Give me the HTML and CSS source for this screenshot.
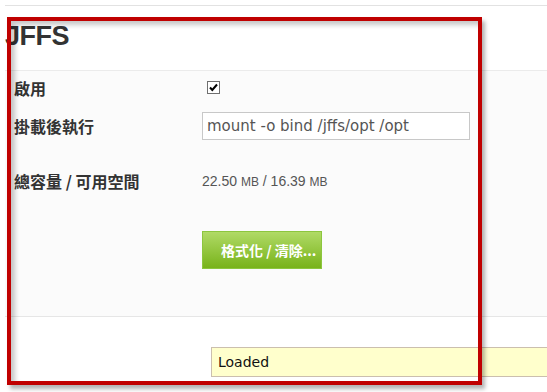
FILE: index.html
```html
<!DOCTYPE html>
<html lang="zh-Hant">
<head>
<meta charset="UTF-8">
<title>JFFS</title>
<link rel="stylesheet" href="styles.css">
</head>
<body>

<div class="page">
    <div class="topline"></div>
    <h1>JFFS</h1>

    <!-- 設定 -->
    <div class="section">
        <div class="row r-enable">
            <div class="label">啟用</div>
            <div class="value">
                <span class="checkbox">
                    <svg width="11" height="11" viewBox="0 0 11 11"><path d="M2 5.5 L4.3 8 L9 2.5" fill="none" stroke="#000" stroke-width="2"/></svg>
                </span>
            </div>
        </div>
        <div class="row r-exec">
            <div class="label">掛載後執行</div>
            <div class="value">
                <input class="text" type="text" value="mount -o bind /jffs/opt /opt">
            </div>
        </div>
        <div class="row r-size">
            <div class="label">總容量 / 可用空間</div>
            <div class="value size">22.50 <small>MB</small> / 16.39 <small>MB</small></div>
        </div>
        <div class="row r-btn">
            <div class="label"></div>
            <div class="value"><button class="btn">格式化 / 清除...</button></div>
        </div>
    </div>

    <div class="status">Loaded</div>
</div>

<!-- 注目枠 -->
<div class="highlight"></div>

</body>
</html>
```

FILE: styles.css
```css
html {
    overflow: hidden;
}

body {
    margin: 0;
    background: #fff;
    font-family: "Liberation Sans", "Noto Sans CJK TC", sans-serif;
    color: #333;
}

.page {
    margin-left: 5px;
}

.topline {
    height: 5px;
    border-bottom: 1px solid #e2e2e2;
}

h1 {
    margin: 0;
    height: 60px;
    padding-top: 4px;
    font-size: 27px;
    line-height: 52px;
    font-weight: bold;
    color: #333;
    letter-spacing: -0.5px;
}

/* ===== 設定欄 ===== */
.section {
    background: #fbfbfb;
    border-top: 1px solid #ebebeb;
    border-bottom: 1px solid #e6e6e6;
    padding-bottom: 47px;
}

.row {
    display: grid;
    grid-template-columns: 188px 1fr;
    align-items: center;
    padding-left: 9px;
}

.label {
    font-family: "Noto Sans CJK TC", sans-serif;
    font-weight: bold;
    font-size: 16px;
    color: #333;
}

.r-enable { height: 34px; }
.r-exec   { height: 42px; }
.r-size   { height: 36px; margin-top: 16px; }
.r-btn    { margin-top: 32px; }

.checkbox {
    display: flex;
    align-items: center;
    justify-content: center;
    width: 13px;
    height: 13px;
    box-sizing: border-box;
    margin-left: 5px;
    margin-top: -1px;
    border: 1px solid #6f6f6f;
    background: #fff;
}

.text {
    width: 268px;
    height: 28px;
    box-sizing: border-box;
    border: 1px solid #c8c8c8;
    background: #fff;
    padding: 0 4px;
    font-family: "DejaVu Sans", sans-serif;
    font-size: 15px;
    color: #555;
    outline: none;
}

.size {
    font-size: 14px;
    color: #555;
}

.size small {
    font-size: 12px;
}

/* ボタン */
.btn {
    display: block;
    width: 120px;
    height: 38px;
    box-sizing: border-box;
    padding: 0 0 0 18px;
    text-align: left;
    border: 1px solid #8cc63e;
    background: linear-gradient(to bottom, #b0da66, #78b31a);
    color: #fff;
    font-family: "Noto Sans CJK TC", sans-serif;
    font-weight: bold;
    font-size: 14px;
    white-space: nowrap;
}

/* ステータス */
.status {
    margin: 30px -20px 0 206px;
    height: 30px;
    box-sizing: border-box;
    border: 1px solid #cbbfae;
    background: #ffffcc;
    padding-left: 6px;
    font-family: "DejaVu Sans", sans-serif;
    font-size: 14px;
    line-height: 28px;
    color: #111;
}

/* 赤枠 */
.highlight {
    position: absolute;
    left: 7px;
    top: 17px;
    width: 475px;
    height: 368px;
    box-sizing: border-box;
    border: 4px solid #c00000;
    box-shadow: 3px 4px 4px rgba(0,0,0,0.3), inset 4px 4px 5px rgba(0,0,0,0.22);
    pointer-events: none;
}
```
